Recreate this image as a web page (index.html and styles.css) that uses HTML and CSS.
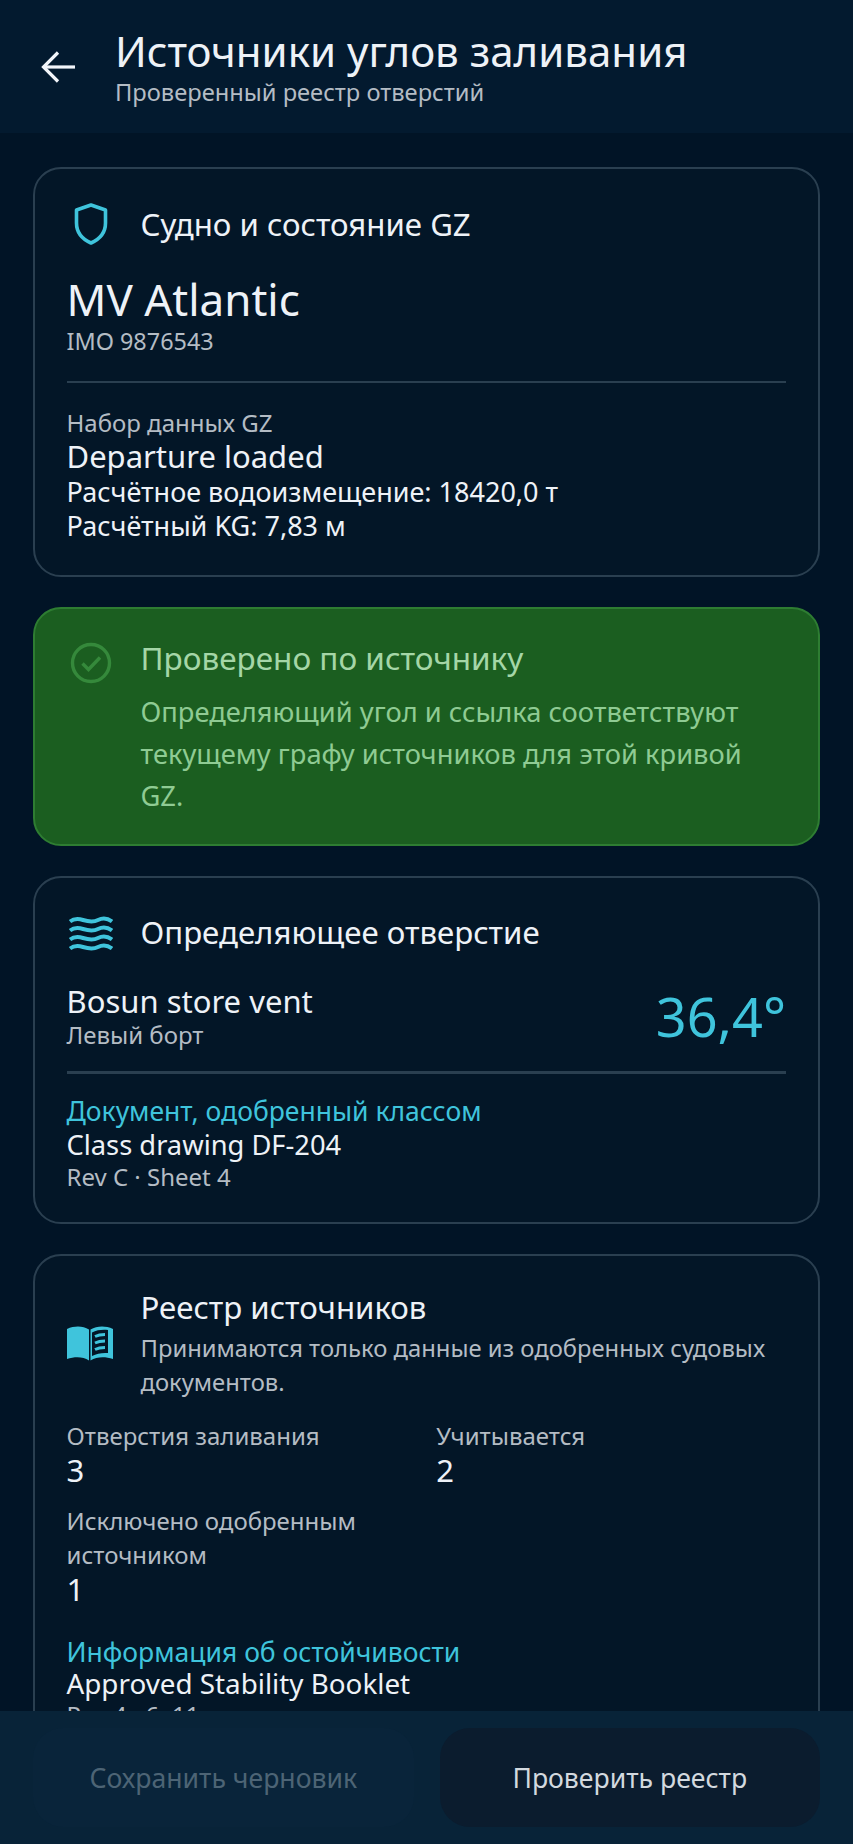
FILE: index.html
```html
<!DOCTYPE html>
<html lang="ru">

<head>
    <meta charset="UTF-8">
    <title>Источники углов заливания</title>
    <link rel="stylesheet" href="styles.css">
</head>

<body>
    <div class="app">

        <header class="topbar">
            <svg class="back" viewBox="0 0 34 32" fill="none" stroke="#f2f5fa" stroke-width="3.2">
                <path d="M34 16H3" />
                <path d="M17 1.500 2.500 16 17 30.500" />
            </svg>
            <div>
                <h1>Источники углов заливания</h1>
                <p class="subtitle">Проверенный реестр отверстий</p>
            </div>
        </header>

        <main class="content">

            <section class="card card-ship">
                <div class="card-head">
                    <svg class="icon" viewBox="0 0 46 42" fill="none" stroke="#3fc4dc" stroke-width="3.6" stroke-linejoin="round">
                        <path d="M24 2 38.500 7V20C38.500 29 33 36 24 40 15 36 9.500 29 9.500 20V7Z" />
                    </svg>
                    <h2>Судно и состояние GZ</h2>
                </div>
                <div class="ship-name">MV Atlantic</div>
                <div class="small imo">IMO 9876543</div>
                <hr class="divider">
                <div class="small">Набор данных GZ</div>
                <div class="value-lg">Departure loaded</div>
                <div class="value value-calc">Расчётное водоизмещение: 18420,0 т</div>
                <div class="value value-calc">Расчётный KG: 7,83 м</div>
            </section>

            <section class="card card-ok">
                <svg class="icon" viewBox="0 0 46 42" fill="none" stroke="#35893b" stroke-width="3.4">
                    <circle cx="24" cy="21" r="18.500" />
                    <path d="M15.500 21.500 21.500 27.500 33 15.500" />
                </svg>
                <div>
                    <h2>Проверено по источнику</h2>
                    <p>Определяющий угол и ссылка соответствуют текущему графу источников для этой кривой GZ.</p>
                </div>
            </section>

            <section class="card">
                <div class="card-head opening-head">
                    <svg class="icon" viewBox="0 0 46 42" fill="none" stroke="#3fc4dc" stroke-width="4">
                        <path d="M3 10.500C7 7.500 11 7.500 16 9S26 11.500 31 9 41 7.500 45 10.500" />
                        <path d="M3 19.500C7 16.500 11 16.500 16 18S26 20.500 31 18 41 16.500 45 19.500" />
                        <path d="M3 28.500C7 25.500 11 25.500 16 27S26 29.500 31 27 41 25.500 45 28.500" />
                        <path d="M3 37.500C7 34.500 11 34.500 16 36S26 38.500 31 36 41 34.500 45 37.500" />
                    </svg>
                    <h2>Определяющее отверстие</h2>
                </div>
                <div class="opening">
                    <div>
                        <div class="value-lg">Bosun store vent</div>
                        <div class="small">Левый борт</div>
                    </div>
                    <div class="angle">36,4°</div>
                </div>
                <hr class="divider divider-tight">
                <div class="accent">Документ, одобренный классом</div>
                <div class="value">Class drawing DF-204</div>
                <div class="small">Rev C · Sheet 4</div>
            </section>

            <section class="card">
                <div class="card-head registry-head">
                    <svg class="icon" viewBox="0 0 46 42" fill="#3fc4dc">
                        <g transform="translate(0 3)">
                            <path d="M0 4C8 0.500 16 1 22 4.500V35.500C16 31.500 8 31.500 0 34Z" />
                            <path d="M23.500 4.500C30 1 38 0.500 46 4V34C38 31.500 30 31.500 23.500 35.500Z" />
                            <path fill="#031627" d="M25 7.500C30 5 35 4.500 41 5V28C35 27.500 30 28.500 25 31Z" />
                            <g fill="none" stroke="#3fc4dc" stroke-width="3">
                                <path d="M28 11.500C31 10 34 9.500 38 9.500" />
                                <path d="M28 18C31 16.500 34 16 38 16" />
                                <path d="M28 24.500C31 23 34 22.500 38 22.500" />
                            </g>
                        </g>
                    </svg>
                    <div>
                        <h2>Реестр источников</h2>
                        <p class="note">Принимаются только данные из одобренных судовых документов.</p>
                    </div>
                </div>
                <div class="stats">
                    <div>
                        <div class="stat-label">Отверстия заливания</div>
                        <div class="stat-value">3</div>
                    </div>
                    <div>
                        <div class="stat-label">Учитывается</div>
                        <div class="stat-value">2</div>
                    </div>
                    <div>
                        <div class="stat-label">Исключено одобренным источником</div>
                        <div class="stat-value">1</div>
                    </div>
                </div>
                <div class="accent">Информация об остойчивости</div>
                <div class="value booklet">Approved Stability Booklet</div>
                <div class="small">Rev 4 · 6. 11</div>
            </section>

        </main>

        <footer class="bottombar">
            <button class="btn btn-ghost">Сохранить черновик</button>
            <button class="btn btn-dark">Проверить реестр</button>
        </footer>

    </div>
</body>

</html>
```

FILE: styles.css
```css
:root {
    --bg: #011426;
    --card: #031627;
    --border: #2a3f50;
    --text: #eef2f7;
    --muted: #b4bcc4;
    --accent: #3fc4dc;
}

* {
    box-sizing: border-box;
}

html,
body {
    margin: 0;
    height: 100%;
}

body {
    font-family: "Noto Sans", sans-serif;
    background: var(--bg);
    color: var(--text);
}

.app {
    display: flex;
    flex-direction: column;
    height: 100vh;
    overflow: hidden;
}

.topbar {
    display: flex;
    align-items: center;
    gap: 40px;
    flex: none;
    height: 133px;
    padding: 0 0 2px 41px;
    background: #031a2f;
}

.back {
    flex: none;
    width: 34px;
    height: 32px;
    margin-top: 2px;
}

h1 {
    margin: 0;
    font-size: 42px;
    font-weight: 400;
    line-height: 52px;
}

.subtitle {
    margin: 0;
    font-size: 23.700px;
    line-height: 30px;
    color: var(--muted);
}

.content {
    flex: 1;
    min-height: 0;
    overflow: hidden;
    padding: 34px 33px 0;
}

.card {
    margin-bottom: 30px;
    padding: 33px 32px 30.500px 31.500px;
    background: var(--card);
    border: 2.500px solid var(--border);
    border-radius: 28px;
}

.card-ship {
    padding: 33.500px 32px 31px 31.500px;
}

.card-head {
    display: flex;
    align-items: center;
    gap: 28px;
    margin-bottom: 27px;
}

.icon {
    flex: none;
    width: 46px;
    height: 42px;
}

h2 {
    margin: 0;
    font-size: 31.200px;
    font-weight: 400;
    line-height: 40px;
}

.ship-name {
    font-size: 44px;
    font-weight: 400;
    line-height: 54px;
}

.small {
    font-size: 24px;
    line-height: 30px;
    color: var(--muted);
}

.imo {
    font-size: 23.400px;
}

.divider {
    height: 2.500px;
    margin: 25px 0 24.500px;
    background: var(--border);
    border: 0;
}

.divider-tight {
    margin: 21.500px 0 20.500px;
}

.value-lg {
    font-size: 31px;
    line-height: 37px;
}

.value {
    font-size: 27.300px;
    line-height: 33.500px;
}

.value-calc {
    font-size: 27px;
    line-height: 34.500px;
}

.card-ok {
    display: flex;
    gap: 28px;
    padding: 29.500px 32px 26.500px 31.500px;
    background: #1b5e20;
    border-color: #2e7d32;
}

.card-ok .icon {
    margin-top: 3.500px;
}

.card-ok h2 {
    margin-bottom: 13px;
    font-size: 31.500px;
    color: #a5d6a7;
}

.card-ok p {
    margin: 0;
    font-size: 27.300px;
    line-height: 42px;
    color: #8fcb93;
}

.opening-head {
    margin-bottom: 30px;
}

.opening {
    display: flex;
    align-items: center;
    justify-content: space-between;
}

.angle {
    font-size: 54px;
    font-weight: 400;
    line-height: 64px;
    color: var(--accent);
}

.accent {
    font-size: 26.500px;
    line-height: 34px;
    color: var(--accent);
}

.registry-head {
    margin: -2.500px 0 20px;
}

.note {
    margin: 4px 0 0;
    font-size: 23.800px;
    line-height: 34px;
    color: var(--muted);
}

.stats {
    display: grid;
    grid-template-columns: 1fr 1fr;
    gap: 17px 20px;
    margin-bottom: 29px;
}

.stat-label {
    font-size: 24px;
    line-height: 34px;
    color: var(--muted);
}

.stat-value {
    font-size: 31px;
    line-height: 34px;
}

.booklet {
    margin-top: -2px;
    font-size: 27.800px;
}

.bottombar {
    display: flex;
    gap: 26px;
    flex: none;
    height: 133px;
    padding: 17px 33px;
    background: #082338;
}

.btn {
    flex: 1;
    font-family: inherit;
    font-size: 26.600px;
    border: 0;
    border-radius: 30px;
}

.btn-ghost {
    background: #09243a;
    color: #4d6475;
}

.btn-dark {
    background: #0b1c2e;
    color: #d3d9df;
}
```
